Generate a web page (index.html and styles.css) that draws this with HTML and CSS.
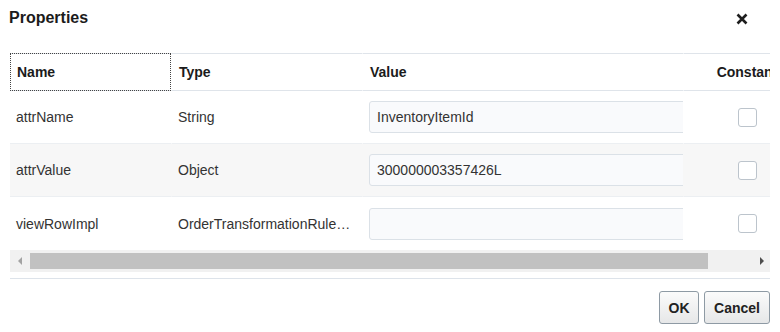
FILE: index.html
```html
<!DOCTYPE html>
<html>
<head>
<meta charset="utf-8">
<link rel="stylesheet" href="styles.css">
</head>
<body>
<div class="dialog">
  <div class="titlebar">
    <h1 class="title">Properties</h1>
    <span class="close" aria-label="Close">
      <svg width="12" height="12" viewBox="0 0 12 12"><path d="M1.5 1.5 L10.5 10.5 M10.5 1.5 L1.5 10.5" stroke="#1e1e1e" stroke-width="2.6" stroke-linecap="butt"/></svg>
    </span>
  </div>
  <div class="grid">
    <div class="grid-clip">
      <table class="props">
        <colgroup>
          <col class="c-name"><col class="c-type"><col class="c-value"><col class="c-const">
        </colgroup>
        <thead>
          <tr>
            <th class="focus">Name</th>
            <th>Type</th>
            <th>Value</th>
            <th class="center">Constant</th>
          </tr>
        </thead>
        <tbody>
          <tr>
            <td>attrName</td>
            <td>String</td>
            <td class="val"><div class="input">InventoryItemId</div></td>
            <td class="center"><span class="check"></span></td>
          </tr>
          <tr class="alt">
            <td>attrValue</td>
            <td>Object</td>
            <td class="val"><div class="input">300000003357426L</div></td>
            <td class="center"><span class="check"></span></td>
          </tr>
          <tr>
            <td>viewRowImpl</td>
            <td>OrderTransformationRule…</td>
            <td class="val"><div class="input"></div></td>
            <td class="center"><span class="check"></span></td>
          </tr>
        </tbody>
      </table>
    </div>
    <div class="hscroll">
      <span class="arrow left"></span>
      <div class="track"><div class="thumb"></div></div>
      <span class="arrow right"></span>
    </div>
  </div>
  <div class="separator"></div>
  <div class="footer">
    <button class="btn ok">OK</button>
    <button class="btn cancel">Cancel</button>
  </div>
</div>
</body>
</html>
```

FILE: styles.css
```css
* { box-sizing: border-box; }
html, body { margin: 0; padding: 0; background: #fff; }
body {
  font-family: "Liberation Sans", Arial, sans-serif;
  font-size: 14px;
  color: #333;
}
.dialog {
  width: 780px;
  padding: 0 10px;
}
.titlebar {
  height: 53px;
  display: flex;
  justify-content: space-between;
  align-items: flex-start;
  padding-top: 8px;
}
.title {
  margin: 0 0 0 -1px;
  font-size: 16px;
  line-height: 20px;
  font-weight: bold;
  color: #1b1b1b;
}
.close {
  width: 12px;
  height: 12px;
  margin-top: 5px;
  margin-right: 22px;
  display: block;
}
.close svg { display: block; }
.grid { width: 760px; }
.grid-clip {
  width: 760px;
  overflow: hidden;
}
.props {
  width: 800px;
  table-layout: fixed;
  border-collapse: separate;
  border-spacing: 0;
}
.c-name { width: 161px; }
.c-type { width: 191px; }
.c-value { width: 321px; }
.c-const { width: 127px; }
.props th {
  height: 38px;
  border-top: 1px solid #dfe4ea;
  border-bottom: 1px solid #dfe4ea;
  text-align: left;
  padding: 0 7px;
  font-weight: bold;
  font-size: 14px;
  color: #1b1b1b;
  white-space: nowrap;
  overflow: hidden;
}
.props th.focus {
  outline: 1px dotted #444;
  outline-offset: -1px;
}
.props th + th, .props td + td { border-left: 1px solid #fff; }
.props tr.alt td + td { border-left-color: #f7f7f7; }
.props .center { text-align: center; }
.props td {
  height: 53px;
  border-bottom: 1px solid #eceff2;
  padding: 0 6px;
  white-space: nowrap;
  overflow: hidden;
  color: #333;
}
.props tbody tr:last-child td { border-bottom: 0; }
.props tr.alt td { background: #f7f7f7; }
.props td.val { padding: 0 0 0 6px; }
.input {
  width: 330px;
  height: 32px;
  line-height: 30px;
  padding-left: 7px;
  border: 1px solid #dbe1e7;
  border-radius: 3px;
  background: #f9fafc;
  color: #333;
}
.check {
  display: inline-block;
  width: 19px;
  height: 19px;
  border: 1px solid #bcc4cc;
  border-radius: 3px;
  background: #fff;
  vertical-align: middle;
}
.hscroll {
  height: 22px;
  background: #f1f1f1;
  display: flex;
  align-items: center;
}
.arrow {
  width: 0;
  height: 0;
  border-top: 4px solid transparent;
  border-bottom: 4px solid transparent;
}
.arrow.left {
  border-right: 4px solid #a3a3a3;
  margin: 0 8px 0 8px;
}
.arrow.right {
  border-left: 4px solid #4e4e4e;
  margin: 0 6px 0 8px;
}
.track {
  flex: 1;
  height: 16px;
}
.thumb {
  width: 678px;
  height: 16px;
  background: #c1c1c1;
}
.separator {
  margin-top: 6px;
  height: 1px;
  background: #dde3ea;
}
.footer {
  display: flex;
  justify-content: flex-end;
  gap: 5px;
  padding-top: 12px;
}
.btn {
  height: 33px;
  padding: 0;
  border: 1px solid #8e9aa4;
  border-radius: 3px;
  background: linear-gradient(#fbfbfb, #e6e7e8);
  font-family: "Liberation Sans", Arial, sans-serif;
  font-size: 14px;
  font-weight: bold;
  color: #222;
}
.btn.ok { width: 40px; }
.btn.cancel { width: 66px; }
```
